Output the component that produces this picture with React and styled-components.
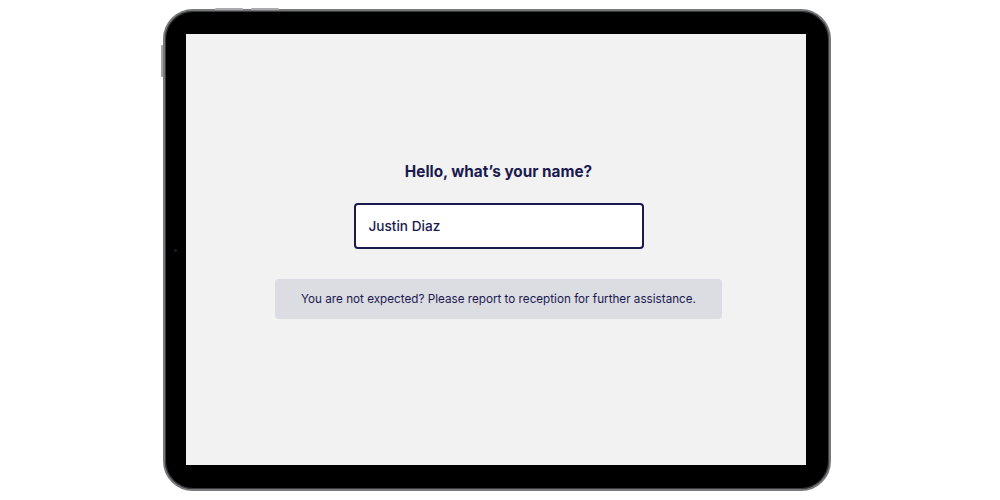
import styled, { createGlobalStyle } from "styled-components";

const GlobalStyle = createGlobalStyle`
  html, body {
    margin: 0;
    padding: 0;
    background: #ffffff;
  }
  body {
    font-family: "Inter", "Noto Sans", sans-serif;
  }
`;

const Page = styled.div`
  width: 1000px;
  height: 500px;
  box-sizing: border-box;
  padding: 9px 0 0 163px;
`;

const Device = styled.div`
  position: relative;
  width: 668px;
  height: 482px;
  box-sizing: border-box;
  padding: 23px 23px 24px 21px;
  border-radius: 30px;
  background: #000;
  border: 2px solid #76787b;
  box-shadow: inset 0 0 0 1px #3a3b3d;
`;

const TopButton = styled.span`
  position: absolute;
  top: -3px;
  left: ${(p) => p.$left}px;
  width: ${(p) => p.$width}px;
  height: 2px;
  border-radius: 1px 1px 0 0;
  background: #a9abad;
`;

const SideButton = styled.span`
  position: absolute;
  left: -4px;
  top: ${(p) => p.$top}px;
  width: 2px;
  height: ${(p) => p.$height}px;
  border-radius: 1px 0 0 1px;
  background: #a3a5a8;
`;

const Camera = styled.span`
  position: absolute;
  left: 9px;
  top: 238px;
  width: 3px;
  height: 3px;
  border-radius: 50%;
  background: #1c1d20;
`;

const Screen = styled.div`
  width: 100%;
  height: 100%;
  background: #f2f2f2;
  display: flex;
  flex-direction: column;
  align-items: center;
  padding: 128px 0 0 5px;
  box-sizing: border-box;
`;

const Title = styled.h1`
  margin: 0;
  font-size: 15.3px;
  line-height: 20px;
  font-weight: 700;
  color: #1b1a4e;
`;

const NameInput = styled.input`
  margin-top: 21px;
  width: 290px;
  height: 46px;
  box-sizing: border-box;
  border: 2px solid #1b1a4e;
  border-radius: 4px;
  background: #ffffff;
  padding: 0 13px;
  font-family: "Inter", "Noto Sans", sans-serif;
  font-size: 13.6px;
  font-weight: 500;
  color: #1b1a4e;
  outline: none;
`;

const Notice = styled.div`
  margin-top: 30px;
  width: 447px;
  height: 40px;
  border-radius: 4px;
  background: #dcdce3;
  display: flex;
  align-items: center;
  justify-content: center;
  font-size: 11.7px;
  color: #1b1a4e;
`;

export default function App() {
  return (
    <>
      <GlobalStyle />
      <Page>
        <Device>
          <TopButton $left={50} $width={28} />
          <TopButton $left={86} $width={28} />
          <SideButton $top={34} $height={32} />
          <Camera />
          <Screen>
            <Title>Hello, what’s your name?</Title>
            <NameInput defaultValue="Justin Diaz" />
            <Notice>
              You are not expected? Please report to reception for further assistance.
            </Notice>
          </Screen>
        </Device>
      </Page>
    </>
  );
}
